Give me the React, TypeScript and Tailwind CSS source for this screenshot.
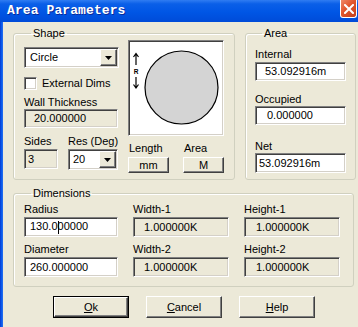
import React from 'react';

const sunken =
  'border border-t-[#808080] border-l-[#808080] border-b-white border-r-white shadow-[inset_1px_1px_0_#404040,inset_-1px_-1px_0_#D4D0C8]';
const raised =
  'border border-t-white border-l-white border-b-[#404040] border-r-[#404040] shadow-[inset_-1px_-1px_0_#808080] bg-[#ECE9D8]';

interface FieldProps {
  value: React.ReactNode;
  w: string;
  white?: boolean;
  pad: string;
  h?: string;
}

const Field: React.FC<FieldProps> = ({ value, w, white, pad, h = 'h-[20px]' }) => (
  <div className={`${sunken} ${w} ${h} ${white ? 'bg-white' : 'bg-[#ECE9D8]'} ${pad} flex items-center leading-none`}>
    {value}
  </div>
);

const Arrow = () => (
  <svg width="7" height="4" viewBox="0 0 7 4">
    <path d="M0 0h7L3.5 4z" fill="#000" />
  </svg>
);

const Combo: React.FC<{ value: string; w: string; pad: string }> = ({ value, w, pad }) => (
  <div className={`${sunken} ${w} h-[21px] bg-white flex items-stretch p-[1px]`}>
    <div className={`flex-1 ${pad} flex items-center leading-none`}>{value}</div>
    <div className={`${raised} w-[17px] flex items-center justify-center`}>
      <Arrow />
    </div>
  </div>
);

const Group: React.FC<{ title: string; className: string; children: React.ReactNode }> = ({ title, className, children }) => (
  <fieldset className={`border border-[#D0D0BF] rounded-[3px] shadow-[inset_1px_1px_0_#fff] ${className}`}>
    <legend className="ml-[7px] px-[2px] leading-[13px]">{title}</legend>
    {children}
  </fieldset>
);

const Label: React.FC<{ children: React.ReactNode; className?: string }> = ({ children, className = '' }) => (
  <div className={`leading-[13px] whitespace-nowrap ${className}`}>{children}</div>
);

const Btn: React.FC<{ children: React.ReactNode; isDefault?: boolean }> = ({ children, isDefault }) =>
  isDefault ? (
    <div className="border border-black w-[76px] h-[22px] flex">
      <div className={`${raised} flex-1 flex items-center justify-center`}>{children}</div>
    </div>
  ) : (
    <div className={`${raised} w-[76px] h-[22px] flex items-center justify-center`}>{children}</div>
  );

export default function App() {
  return (
    <div className="w-[358px] h-[327px] overflow-hidden bg-[#ECE9D8] flex flex-col text-[11px] text-black font-['Liberation_Sans',Arial,sans-serif]">
      {/* title bar */}
      <div className="h-[22px] shrink-0 flex justify-between items-start bg-[linear-gradient(180deg,#2F7CF2_0%,#0A5FE8_18%,#0056E5_55%,#004BD8_100%)]">
        <div className="pl-[7px] pt-[3px] text-white text-[13px] leading-[15px] font-bold tracking-[0.1px] font-['Liberation_Mono',monospace] [text-shadow:1px_1px_0_#0B2A9A]">
          Area Parameters
        </div>
        <div className="mr-[1px] w-[17px] h-[18px] rounded-b-[3px] border border-t-0 border-white bg-[linear-gradient(135deg,#F08868_0%,#E0542C_45%,#C2401C_100%)] flex items-center justify-center">
          <svg width="10" height="10" viewBox="0 0 10 10">
            <path d="M1 1L9 9M9 1L1 9" stroke="#fff" strokeWidth="2" strokeLinecap="square" />
          </svg>
        </div>
      </div>

      <div className="flex flex-1">
        <div className="w-[3px] bg-[linear-gradient(90deg,#0838D0,#0A5BEA,#2A6FF0)]" />

        <div className="flex-1 pl-[10px]">
          <div className="flex gap-[10px] mt-[5px]">
            {/* Shape */}
            <Group title="Shape" className="w-[220px] h-[153px] px-[10px]">
              <div className="flex gap-[10px]">
                <div className="w-[94px] mt-[7px]">
                  <Combo value="Circle" w="w-[95px]" pad="pl-[4px]" />
                  <div className="flex items-center mt-[9px] h-[13px]">
                    <div className={`${sunken} w-[13px] h-[13px] bg-white`} />
                    <span className="ml-[5px] leading-none">External Dims</span>
                  </div>
                  <Label className="mt-[6px]">Wall Thickness</Label>
                  <Field value="20.000000" w="w-[94px]" pad="pl-[9px]" h="h-[19px]" />
                  <div className="flex gap-[10px] mt-[7px]">
                    <div>
                      <Label>Sides</Label>
                      <div className="mt-[1px]">
                        <Field value="3" w="w-[34px]" pad="pl-[3px]" />
                      </div>
                    </div>
                    <div>
                      <Label>Res (Deg)</Label>
                      <div className="mt-[1px]">
                        <Combo value="20" w="w-[50px]" pad="pl-[3px]" />
                      </div>
                    </div>
                  </div>
                </div>
                <div className="w-[96px]">
                  <div className={`${sunken} w-[96px] h-[96px] bg-white`}>
                    <svg width="94" height="94" viewBox="0 0 94 94">
                      <circle cx="52.5" cy="46.5" r="36.5" fill="#D4D4D4" stroke="#000" strokeWidth="1.2" />
                      <path d="M7 13v11M4.5 16L7 12.5L9.5 16" stroke="#000" strokeWidth="1.2" fill="none" />
                      <text x="7" y="32.5" fontSize="6.5" fontWeight="bold" textAnchor="middle" fontFamily="Liberation Sans, Arial, sans-serif">R</text>
                      <path d="M7 36v11M4.5 43.5L7 47L9.5 43.5" stroke="#000" strokeWidth="1.2" fill="none" />
                    </svg>
                  </div>
                  <div className="flex gap-[14px] mt-[6px]">
                    <div className="w-[41px]">
                      <Label className="pl-[1px]">Length</Label>
                      <div className={`${raised} mt-[2px] h-[16px] flex items-center justify-center leading-none`}>mm</div>
                    </div>
                    <div className="w-[41px]">
                      <Label className="pl-[1px]">Area</Label>
                      <div className={`${raised} mt-[2px] h-[16px] flex items-center justify-center leading-none`}>M</div>
                    </div>
                  </div>
                </div>
              </div>
            </Group>

            {/* Area */}
            <Group title="Area" className="w-[110px] h-[153px] px-[9px]">
              <Label className="mt-[8px]">Internal</Label>
              <div className="mt-[1px]">
                <Field value="53.092916m" w="w-[91px]" white pad="pl-[9px]" h="h-[19px]" />
              </div>
              <Label className="mt-[12px]">Occupied</Label>
              <div>
                <Field value="0.000000" w="w-[91px]" white pad="pl-[11px]" h="h-[19px]" />
              </div>
              <Label className="mt-[15px]">Net</Label>
              <div>
                <Field value="53.092916m" w="w-[91px]" white pad="pl-[3px]" />
              </div>
            </Group>
          </div>

          {/* Dimensions */}
          <Group title="Dimensions" className="mt-[7px] w-[341px] px-[10px] pb-[9px]">
            <div className="grid grid-cols-[94px_96px_96px] gap-x-[15px] mt-[3px]">
              <div>
                <Label>Radius</Label>
                <div className="mt-[1px]">
                  <Field
                    value={
                      <span>
                        130.0<span className="inline-block w-[1px] h-[13px] bg-black align-middle -mr-[1px]" />00000
                      </span>
                    }
                    w="w-[94px]"
                    white
                    pad="pl-[5px]"
                  />
                </div>
                <Label className="mt-[6px]">Diameter</Label>
                <div className="mt-[1px]">
                  <Field value="260.000000" w="w-[94px]" white pad="pl-[5px]" />
                </div>
              </div>
              <div>
                <Label>Width-1</Label>
                <div className="mt-[1px]">
                  <Field value="1.000000K" w="w-[96px]" pad="pl-[10px]" />
                </div>
                <Label className="mt-[6px]">Width-2</Label>
                <div className="mt-[1px]">
                  <Field value="1.000000K" w="w-[96px]" pad="pl-[10px]" />
                </div>
              </div>
              <div>
                <Label>Height-1</Label>
                <div className="mt-[1px]">
                  <Field value="1.000000K" w="w-[96px]" pad="pl-[11px]" />
                </div>
                <Label className="mt-[6px]">Height-2</Label>
                <div className="mt-[1px]">
                  <Field value="1.000000K" w="w-[96px]" pad="pl-[11px]" />
                </div>
              </div>
            </div>
          </Group>

          <div className="flex gap-[17px] mt-[9px] ml-[40px]">
            <Btn isDefault>
              <span>
                <u>O</u>k
              </span>
            </Btn>
            <Btn>
              <span>
                <u>C</u>ancel
              </span>
            </Btn>
            <Btn>
              <span>
                <u>H</u>elp
              </span>
            </Btn>
          </div>
        </div>
      </div>
    </div>
  );
}
